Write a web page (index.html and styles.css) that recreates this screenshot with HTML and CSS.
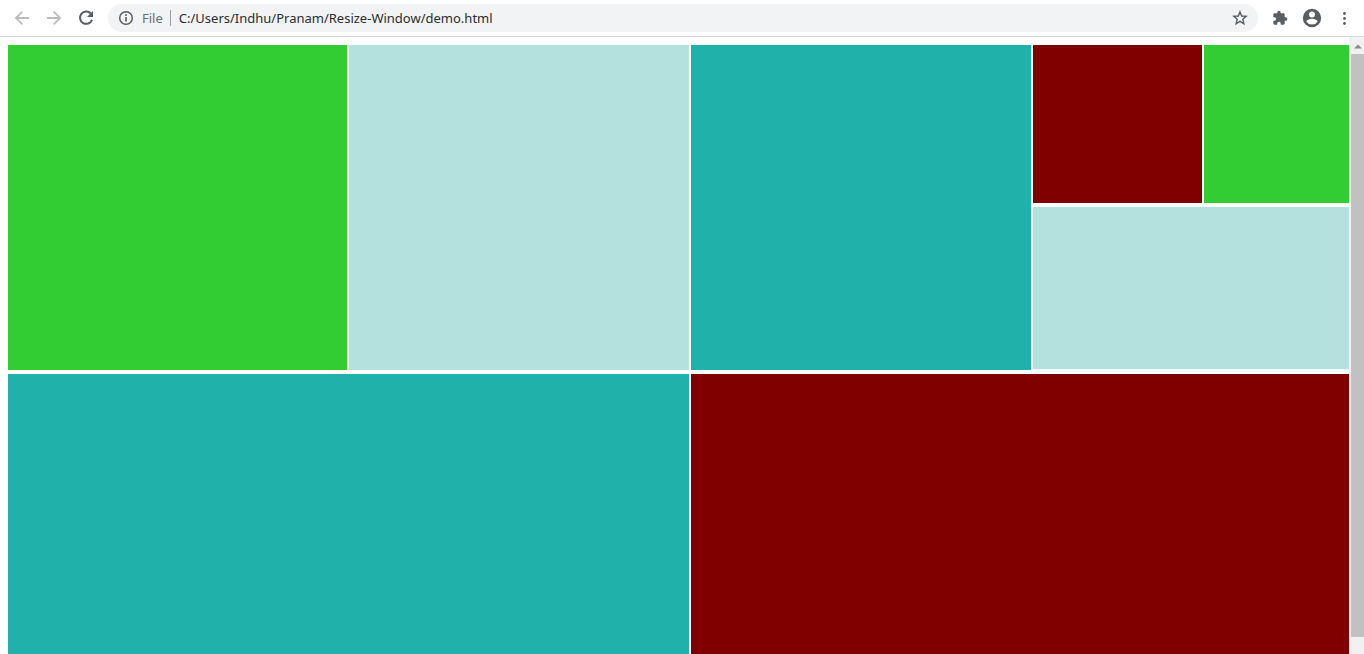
FILE: index.html
```html
<!DOCTYPE html>
<html lang="en">
<head>
<meta charset="utf-8">
<title>Resize Window</title>
<link rel="stylesheet" href="styles.css">
</head>
<body>
<header class="toolbar">
  <button class="tool" type="button" aria-label="Back" disabled>
    <svg class="icon faded" viewBox="0 0 16 16"><path d="M15 8H2.500M8.300 1.700L2 8L8.300 14.300" fill="none" stroke="currentColor" stroke-width="1.800"/></svg>
  </button>
  <button class="tool" type="button" aria-label="Forward" disabled>
    <svg class="icon faded" viewBox="0 0 16 16"><path d="M1 8H13.500M7.700 1.700L14 8L7.700 14.300" fill="none" stroke="currentColor" stroke-width="1.800"/></svg>
  </button>
  <button class="tool" type="button" aria-label="Reload">
    <svg class="icon" viewBox="0 0 16 16"><path d="M12.800 3.500A6.200 6.200 0 1 0 14 9.800" fill="none" stroke="currentColor" stroke-width="2"/><path d="M15 1V7H9z" fill="currentColor"/></svg>
  </button>
  <form class="address">
    <button class="site" type="button">
      <svg class="info" viewBox="0 0 16 16"><circle cx="8" cy="8" r="6.300" fill="none" stroke="currentColor" stroke-width="1.500"/><path d="M7.200 7h1.600v4.500H7.200zM7.200 4.300h1.600v1.600H7.200z" fill="currentColor"/></svg>
      <span>File</span>
    </button>
    <input class="url" type="text" aria-label="Address" value="C:/Users/Indhu/Pranam/Resize-Window/demo.html">
    <button class="star" type="button" aria-label="Bookmark">
      <svg class="icon" viewBox="0 0 16 16"><path d="M8 1.900L9.700 6L14.200 6.400L10.800 9.300L11.900 13.700L8 11.300L4.100 13.700L5.200 9.300L1.800 6.400L6.300 6z" fill="none" stroke="currentColor" stroke-width="1.400"/></svg>
    </button>
  </form>
  <button class="tool" type="button" aria-label="Extensions">
    <svg class="icon" viewBox="0 0 24 24"><path d="M20.500 11H19V7c0-1.100-.9-2-2-2h-4V3.500a2.500 2.500 0 0 0-5 0V5H4c-1.100 0-2 .9-2 2v3.800h1.500a2.700 2.700 0 0 1 0 5.400H2V20c0 1.100.9 2 2 2h3.800v-1.500a2.700 2.700 0 0 1 5.400 0V22H17c1.100 0 2-.9 2-2v-4h1.500a2.500 2.500 0 0 0 0-5z" fill="currentColor"/></svg>
  </button>
  <button class="tool" type="button" aria-label="Profile">
    <svg class="avatar" viewBox="0 0 24 24"><path d="M12 2a10 10 0 1 0 0 20a10 10 0 0 0 0-20zm0 3a3.200 3.200 0 1 1 0 6.400A3.200 3.200 0 0 1 12 5zm0 14.200a7.200 7.200 0 0 1-6-3.200c.03-2 4-3.100 6-3.100s5.970 1.100 6 3.100a7.200 7.200 0 0 1-6 3.200z" fill="currentColor"/></svg>
  </button>
  <button class="tool" type="button" aria-label="Menu">
    <svg class="icon" viewBox="0 0 16 16"><g fill="currentColor"><circle cx="8.500" cy="3.500" r="1.400"/><circle cx="8.500" cy="8.500" r="1.400"/><circle cx="8.500" cy="13.500" r="1.400"/></g></svg>
  </button>
</header>
<div class="view">
  <main class="panes">
    <section class="pane green"></section>
    <section class="pane pale"></section>
    <section class="pane teal"></section>
    <div class="split">
      <section class="pane maroon"></section>
      <section class="pane green"></section>
      <section class="pane pale wide"></section>
    </div>
    <section class="pane teal half"></section>
    <section class="pane maroon half"></section>
  </main>
  <aside class="scrollbar">
    <svg class="up" viewBox="0 0 8 5"><path d="M0 4.500L4 .5L8 4.500z" fill="currentColor"/></svg>
    <div class="thumb"></div>
  </aside>
</div>
</body>
</html>
```
FILE: styles.css
```css
* {
  box-sizing: border-box;
}

body {
  display: flex;
  flex-direction: column;
  height: 100vh;
  margin: 0;
  overflow: hidden;
  background: #fff;
  font-family: "Noto Sans", "Open Sans", sans-serif;
  font-size: 13px;
}

button,
input {
  margin: 0;
  padding: 0;
  border: 0;
  background: none;
  font: inherit;
}

svg {
  display: block;
}

.toolbar {
  display: flex;
  align-items: center;
  flex: none;
  height: 37px;
  padding: 0 4px 0 6px;
  border-bottom: 1px solid #d9d9dc;
  color: #5a5d61;
}

.tool {
  display: flex;
  align-items: center;
  justify-content: center;
  flex: none;
  width: 32px;
  height: 28px;
  color: #5a5d61;
}

.icon {
  width: 16px;
  height: 16px;
}

.faded {
  color: #babcbe;
}

.avatar {
  width: 22px;
  height: 22px;
}

.address {
  display: flex;
  align-items: center;
  flex: 1;
  height: 28px;
  margin: 0 6px;
  padding: 0 10px;
  border-radius: 14px;
  background: #f1f3f4;
}

.site {
  display: flex;
  align-items: center;
  gap: 8px;
  height: 16px;
  padding-right: 7px;
  border-right: 1px solid #9a9da1;
  color: #6b6e72;
}

.info {
  width: 16px;
  height: 16px;
  color: #5a5d61;
}

.url {
  flex: 1;
  min-width: 0;
  padding-left: 8px;
  color: #2c2e31;
  outline: 0;
}

.star {
  color: #5a5d61;
}

.view {
  display: flex;
  flex: 1;
  min-height: 0;
}

.panes {
  display: grid;
  flex: 1;
  grid-template-columns: 339fr 340fr 340fr 316fr;
  grid-template-rows: 325fr 280fr;
  gap: 4px 2px;
  padding: 8px 0 0 8px;
}

.split {
  display: grid;
  grid-template-columns: 169fr 145fr;
  grid-template-rows: 158fr 162fr;
  gap: 4px 2px;
  padding-bottom: 1px;
}

.wide,
.half {
  grid-column: span 2;
}

.green {
  background: #32cd32;
}

.pale {
  background: #b4e1de;
}

.teal {
  background: #20b2aa;
}

.maroon {
  background: #800000;
}

.scrollbar {
  display: flex;
  flex-direction: column;
  align-items: center;
  width: 15px;
  padding: 7px 0 17px 2px;
  background: #f1f1f1;
}

.up {
  width: 8px;
  height: 5px;
  margin-bottom: 5px;
  color: #8b8b8b;
}

.thumb {
  flex: 1;
  width: 100%;
  background: #c1c1c1;
}
```
